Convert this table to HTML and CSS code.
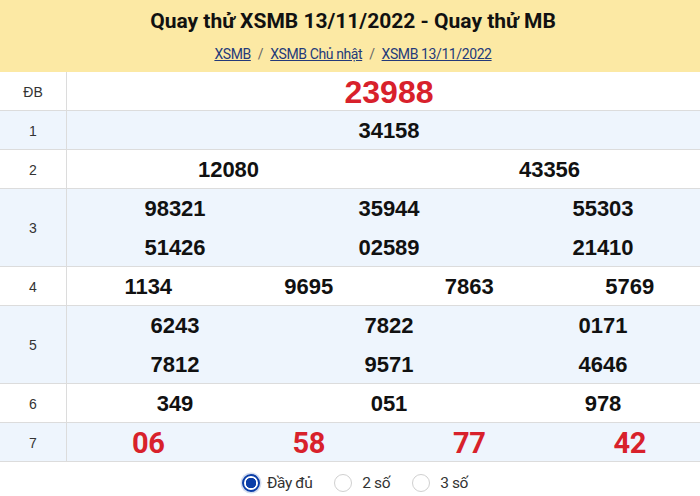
FILE: index.html
```html
<!DOCTYPE html>
<html lang="vi">
<head>
<meta charset="utf-8">
<link rel="stylesheet" href="styles.css">
</head>
<body>
<div class="page">
  <header class="head">
    <h1 class="title">Quay thử XSMB 13/11/2022 - Quay thử MB</h1>
    <nav class="crumbs">
      <a href="#">XSMB</a><span class="sep">/</span><a href="#">XSMB Chủ nhật</a><span class="sep">/</span><a href="#">XSMB 13/11/2022</a>
    </nav>
  </header>
  <div class="table">
    <div class="row">
      <div class="label">ĐB</div>
      <div class="cells c1"><span class="num db">23988</span></div>
    </div>
    <div class="row alt">
      <div class="label">1</div>
      <div class="cells c1"><span class="num">34158</span></div>
    </div>
    <div class="row">
      <div class="label">2</div>
      <div class="cells c2"><span class="num">12080</span><span class="num">43356</span></div>
    </div>
    <div class="row alt">
      <div class="label">3</div>
      <div class="cells c3 two"><span class="num">98321</span><span class="num">35944</span><span class="num">55303</span><span class="num">51426</span><span class="num">02589</span><span class="num">21410</span></div>
    </div>
    <div class="row">
      <div class="label">4</div>
      <div class="cells c4"><span class="num">1134</span><span class="num">9695</span><span class="num">7863</span><span class="num">5769</span></div>
    </div>
    <div class="row alt">
      <div class="label">5</div>
      <div class="cells c3 two"><span class="num">6243</span><span class="num">7822</span><span class="num">0171</span><span class="num">7812</span><span class="num">9571</span><span class="num">4646</span></div>
    </div>
    <div class="row">
      <div class="label">6</div>
      <div class="cells c3"><span class="num">349</span><span class="num">051</span><span class="num">978</span></div>
    </div>
    <div class="row alt">
      <div class="label">7</div>
      <div class="cells c4"><span class="num red">06</span><span class="num red">58</span><span class="num red">77</span><span class="num red">42</span></div>
    </div>
  </div>
  <div class="radios">
    <label class="opt"><span class="dot on"></span>Đầy đủ</label>
    <label class="opt"><span class="dot"></span>2 số</label>
    <label class="opt"><span class="dot"></span>3 số</label>
  </div>
</div>
</body>
</html>
```
FILE: styles.css
```css
html, body {
  margin: 0;
  padding: 0;
  background: #fff;
  overflow: hidden;
}
.page {
  width: 710px;
  font-family: Roboto, "Liberation Sans", sans-serif;
}
.head {
  height: 72px;
  background: #fce9a4;
  display: flex;
  flex-direction: column;
  align-items: center;
  box-sizing: border-box;
  padding-top: 6px;
  padding-right: 4px;
}
.title {
  margin: 0;
  font-size: 21px;
  font-weight: 700;
  color: #111;
  line-height: 30px;
}
.crumbs {
  margin-top: 10px;
  font-size: 14px;
  line-height: 16px;
  color: #555;
  letter-spacing: -0.4px;
}
.crumbs a {
  color: #243a7a;
  text-decoration: underline;
}
.sep {
  margin: 0 7px;
  color: #666;
}
.row {
  display: flex;
  border-bottom: 1px solid #dcdcdc;
  background: #fff;
}
.row.alt {
  background: #eef5fd;
}
.label {
  width: 66px;
  flex: none;
  border-right: 1px solid #dcdcdc;
  display: flex;
  align-items: center;
  justify-content: center;
  font-family: "Liberation Sans", Arial, sans-serif;
  font-size: 14px;
  color: #333;
  padding-top: 1px;
}
.cells {
  flex: 1;
  display: grid;
  grid-auto-rows: 38px;
  padding-left: 1px;
}
.cells.two {
  grid-auto-rows: 38.5px;
}
.c1 { grid-template-columns: 1fr; }
.c2 { grid-template-columns: repeat(2, 1fr); }
.c3 { grid-template-columns: repeat(3, 1fr); }
.c4 { grid-template-columns: repeat(4, 1fr); }
.num {
  display: flex;
  align-items: center;
  justify-content: center;
  padding-top: 2px;
  font-family: "Liberation Sans", Arial, sans-serif;
  font-weight: 700;
  font-size: 22px;
  color: #111;
}
.num.db {
  font-size: 32px;
  color: #d8212b;
}
.num.red {
  font-family: Roboto, "Liberation Sans", sans-serif;
  font-size: 29px;
  color: #d8212b;
  letter-spacing: -0.5px;
}
.radios {
  height: 34px;
  box-sizing: border-box;
  padding-top: 8px;
  padding-right: 0;
  display: flex;
  justify-content: center;
  align-items: center;
  gap: 22px;
  font-size: 15.5px;
  color: #333;
  letter-spacing: -0.4px;
}
.opt {
  display: flex;
  align-items: center;
}
.dot {
  width: 18px;
  height: 18px;
  margin-right: 10px;
  border: 1px solid #d0d0d0;
  border-radius: 50%;
  box-sizing: border-box;
  background: #fff;
}
.dot.on {
  margin-right: 7px;
  border: 2px solid #0b3ea8;
  background: radial-gradient(circle, #0b3ea8 0 5px, #fff 5.5px);
  box-shadow: 0 0 0 1.5px rgba(11, 62, 168, 0.18);
}
```
